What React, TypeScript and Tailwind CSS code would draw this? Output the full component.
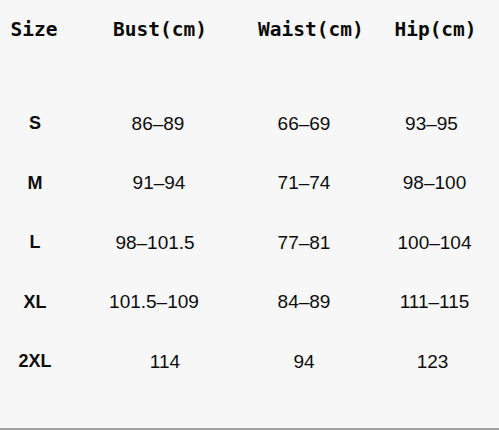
import React from "react";

type Row = { size: string; bust: string; bustCls: string; waist: string; hip: string; hipCls: string };

const rows: Row[] = [
  { size: "S", bust: "86–89", bustCls: "", waist: "66–69", hip: "93–95", hipCls: "pr-[6px]" },
  { size: "M", bust: "91–94", bustCls: "pl-[2px]", waist: "71–74", hip: "98–100", hipCls: "pl-[2px]" },
  { size: "L", bust: "98–101.5", bustCls: "pr-[6px]", waist: "77–81", hip: "100–104", hipCls: "pl-[2px]" },
  { size: "XL", bust: "101.5–109", bustCls: "pr-[8px]", waist: "84–89", hip: "111–115", hipCls: "" },
  { size: "2XL", bust: "114", bustCls: "pl-[14px]", waist: "94", hip: "123", hipCls: "pr-[4px]" },
];

export default function App() {
  return (
    <div className="w-[499px] h-[430px] bg-[#f7f7f7] border-b-2 border-[#a3a3a3] overflow-hidden">
      <div
        className="grid grid-cols-[68px_180px_112px_139px] h-[60px] items-center text-[19.5px] font-bold text-[#0a0a0a]"
        style={{ fontFamily: '"DejaVu Sans Mono", "Liberation Mono", monospace' }}
      >
        <div className="text-center">Size</div>
        <div className="text-center pl-[4px]">Bust(cm)</div>
        <div className="text-center pl-[10px]">Waist(cm)</div>
        <div className="text-center pl-[12px]">Hip(cm)</div>
      </div>
      <div className="h-[34px]" />
      {rows.map((r) => (
        <div
          key={r.size}
          className="grid grid-cols-[68px_180px_112px_139px] h-[59.5px] items-center text-[19px] text-[#0d0d0d]"
          style={{ fontFamily: '"Liberation Sans", Arial, sans-serif' }}
        >
          <div className="text-center font-bold text-[18px] pl-[2px]">{r.size}</div>
          <div className={"text-center " + r.bustCls}>{r.bust}</div>
          <div className="text-center">{r.waist}</div>
          <div className={"text-center pl-[10px] " + r.hipCls}>{r.hip}</div>
        </div>
      ))}
    </div>
  );
}
